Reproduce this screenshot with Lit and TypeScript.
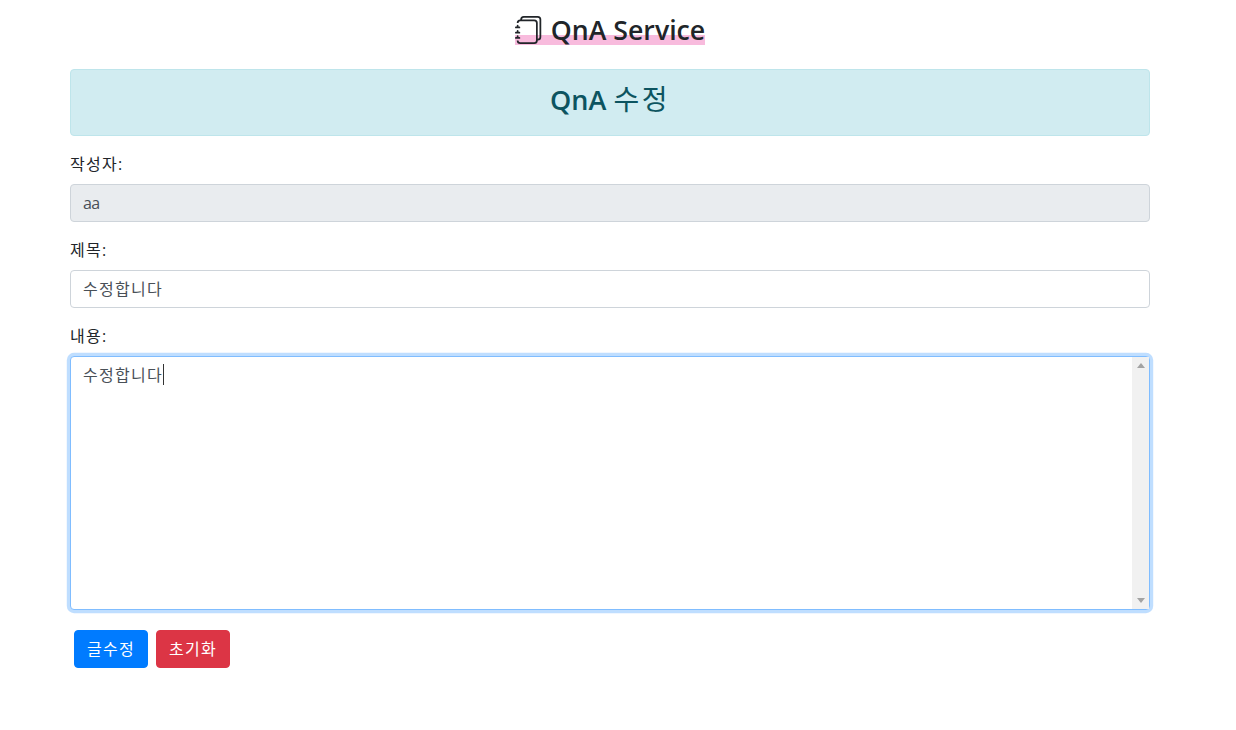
import { LitElement, html, css } from "lit";
import { customElement } from "lit/decorators.js";

@customElement("app-root")
export class AppRoot extends LitElement {
  static styles = css`
    :host {
      display: block;
      font-family: "Open Sans", "Noto Sans CJK KR", sans-serif;
      font-size: 16px;
      line-height: 24px;
      color: #212529;
      background: #fff;
      min-height: 730px;
    }
    * { box-sizing: border-box; }
    .container { width: 1080px; margin-left: 70px; padding-top: 12px; }
    .title-row { display: flex; justify-content: center; height: 57px; }
    .title {
      margin: 0;
      height: 33px;
      display: flex;
      align-items: center;
      gap: 8px;
      font-size: 26.7px;
      line-height: 36px;
      font-weight: 600;
      background: linear-gradient(to bottom, transparent 70%, #f8bbdd 70%);
    }
    .title svg { width: 28px; height: 28px; display: block; fill: #212529; margin-top: 3px; }
    .title span { margin-top: 2px; }
    .alert {
      height: 67px;
      margin-bottom: 16px;
      background: #d1ecf1;
      border: 1px solid #bee5eb;
      border-radius: 4px;
      color: #0c5460;
      display: flex;
      justify-content: center;
      align-items: center;
    }
    .alert h3 { margin: -6px 0 0; font-size: 27px; line-height: 36px; font-weight: 600; }
    .alert h3 span { font-weight: 400; font-size: 28px; letter-spacing: 2.5px; }
    .group { margin-bottom: 16px; }
    label { display: block; height: 24px; margin-bottom: 8px; line-height: 24px; font-size: 16px; letter-spacing: 1.25px; }
    .control {
      display: block;
      width: 100%;
      height: 38px;
      padding: 5px 12px 7px;
      font: inherit;
      font-size: 16px;
      line-height: 24px;
      letter-spacing: 1.25px;
      color: #495057;
      background: #fff;
      border: 1px solid #ced4da;
      border-radius: 4px;
      outline: none;
    }
    .control[readonly] { background: #e9ecef; letter-spacing: -0.6px; padding: 6px 12px; }
    .area-wrap { position: relative; height: 254px; }
    textarea.control {
      height: 254px;
      padding: 6px 29px 6px 12px;
      resize: none;
      border-color: #80bdff;
      box-shadow: 0 0 0 3.2px rgba(0, 123, 255, 0.25);
      caret-color: transparent;
    }
    .caret {
      position: absolute;
      left: 93px;
      top: 8px;
      width: 1px;
      height: 21px;
      background: #333;
    }
    .scrollbar {
      position: absolute;
      top: 1px;
      right: 1px;
      bottom: 1px;
      width: 17px;
      background: #f1f1f1;
      display: flex;
      flex-direction: column;
      justify-content: space-between;
      align-items: center;
      padding: 6px 0;
    }
    .scrollbar svg { width: 8px; height: 5px; display: block; fill: #a3a3a3; }
    .actions { display: flex; gap: 8px; padding-left: 4px; margin-top: 20px; }
    button {
      width: 74px;
      height: 38px;
      padding: 0;
      border: 1px solid transparent;
      border-radius: 4px;
      font: inherit;
      font-size: 16px;
      letter-spacing: 1.3px;
      color: #fff;
    }
    .primary { background: #007bff; border-color: #007bff; }
    .danger { background: #dc3545; border-color: #dc3545; }
  `;

  render() {
    return html`
      <div class="container">
        <div class="title-row">
          <h3 class="title">
            <svg viewBox="0 0 16 16" aria-hidden="true">
              <path d="M5 0h8a2 2 0 0 1 2 2v10a2 2 0 0 1-2 2 2 2 0 0 1-2 2H3a2 2 0 0 1-2-2h1a1 1 0 0 0 1 1h8a1 1 0 0 0 1-1V4a1 1 0 0 0-1-1H3a1 1 0 0 0-1 1H1a2 2 0 0 1 2-2h8a2 2 0 0 1 2 2v9a1 1 0 0 0 1-1V2a1 1 0 0 0-1-1H5a1 1 0 0 0-1 1H3a2 2 0 0 1 2-2z"/>
              <path d="M1 6v-.5a.5.5 0 0 1 1 0V6h.5a.5.5 0 0 1 0 1h-2a.5.5 0 0 1 0-1H1zm0 3v-.5a.5.5 0 0 1 1 0V9h.5a.5.5 0 0 1 0 1h-2a.5.5 0 0 1 0-1H1zm0 2.5v.5H.5a.5.5 0 0 0 0 1h2a.5.5 0 0 0 0-1H2v-.5a.5.5 0 0 0-1 0z"/>
            </svg>
            <span>QnA Service</span>
          </h3>
        </div>
        <div class="alert"><h3>QnA <span>수정</span></h3></div>
        <div class="group">
          <label>작성자:</label>
          <input class="control" readonly .value=${"aa"} />
        </div>
        <div class="group">
          <label>제목:</label>
          <input class="control" .value=${"수정합니다"} />
        </div>
        <div class="group">
          <label>내용:</label>
          <div class="area-wrap">
            <textarea class="control" .value=${"수정합니다"}></textarea>
            <span class="caret"></span>
            <div class="scrollbar" aria-hidden="true">
              <svg viewBox="0 0 8 5"><path d="M4 0l4 5H0z"/></svg>
              <svg viewBox="0 0 8 5"><path d="M0 0h8L4 5z"/></svg>
            </div>
          </div>
        </div>
        <div class="actions">
          <button class="primary">글수정</button>
          <button class="danger">초기화</button>
        </div>
      </div>
    `;
  }
}
